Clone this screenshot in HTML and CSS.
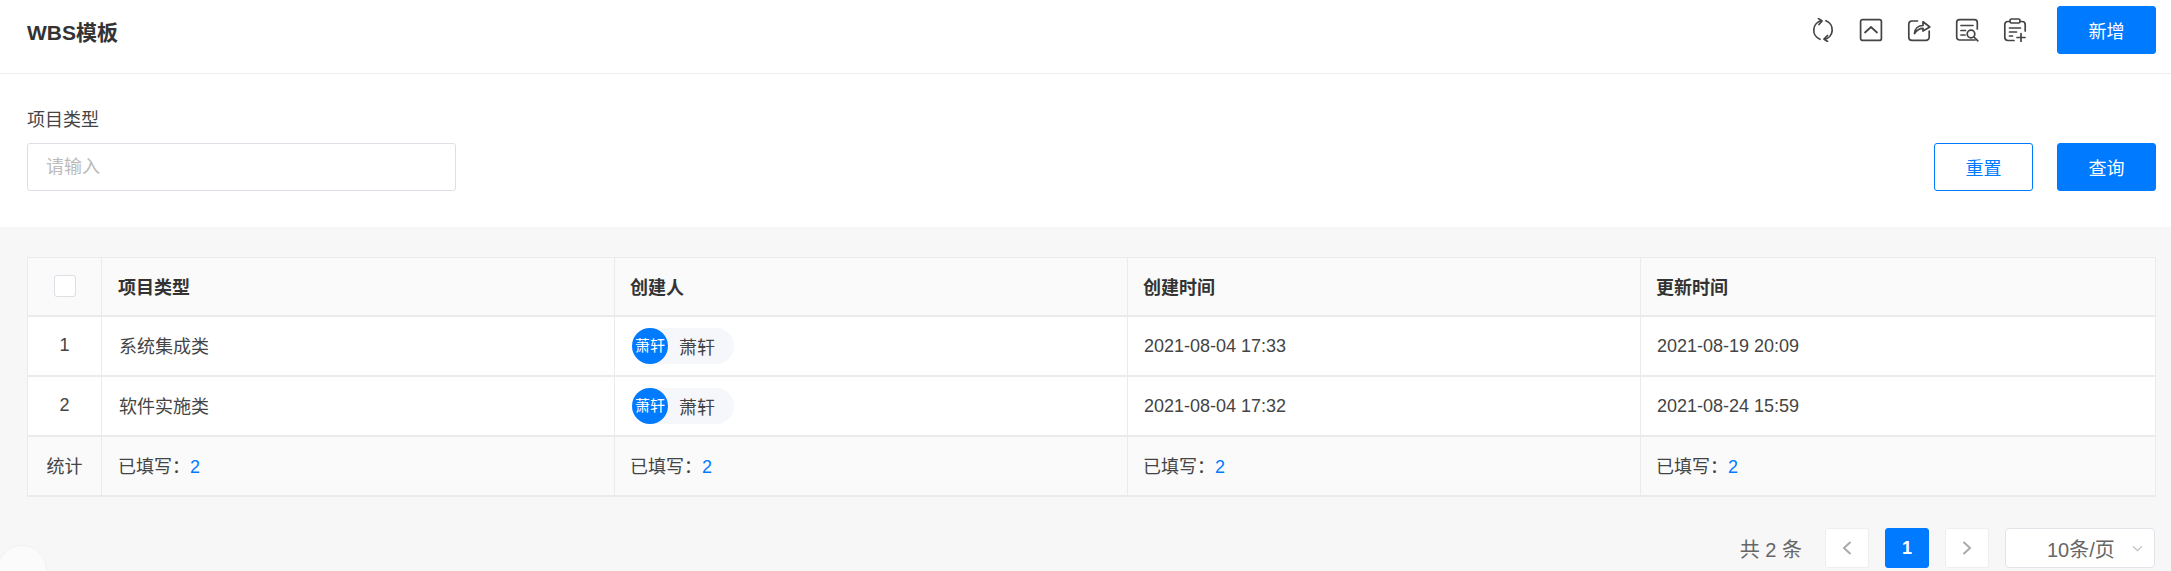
FILE: index.html
```html
<!DOCTYPE html>
<html lang="zh-CN">
<head>
    <meta charset="UTF-8">
    <title>WBS模板</title>
    <link rel="stylesheet" href="styles.css">
</head>
<body>
    <div class="page">
        <!-- 顶部标题栏 -->
        <header class="topbar">
            <h1 class="title">WBS模板</h1>
            <div class="tools">
                <svg class="tool" viewBox="0 0 24 24"><path d="M10.500 2.600A9.800 9.800 0 0 0 9 21.300M15 2.700A9.800 9.800 0 0 1 13.500 21.400"/><path d="M7.500.6L11 3 8 6.500M16.500 17.500L13 21l3.500 2.500"/></svg>
                <svg class="tool" viewBox="0 0 24 24"><rect x="1.600" y="1.600" width="20.800" height="20.800" rx="2"/><path d="M6 14.500L12 9l6 5.500"/></svg>
                <svg class="tool" viewBox="0 0 24 24"><path d="M10.500 3H5a3.200 3.200 0 0 0-3.200 3.200v13A3.200 3.200 0 0 0 5 22.400h14a3.200 3.200 0 0 0 3.200-3.200V13"/><path d="M7.500 15.500c.4-4.800 3.800-8 8.500-8V3.800L22.800 9 16 13v-2.700c-3.500 0-6.300 1.700-8.500 5.200z"/></svg>
                <svg class="tool" viewBox="0 0 24 24"><path d="M20 22H4.500a2.800 2.800 0 0 1-2.800-2.800V4.500a2.800 2.800 0 0 1 2.800-2.800h15a2.800 2.800 0 0 1 2.800 2.800V11"/><path d="M6 7.500h12M6 12.500h4.500M6 17h4"/><circle cx="16" cy="16" r="3.800"/><path d="M19 19l3.800 3.800"/></svg>
                <svg class="tool" viewBox="0 0 24 24"><path d="M7 3.500H5a3.200 3.200 0 0 0-3.200 3.200v12.600A3.200 3.200 0 0 0 5 22.500h6M17 3.500h2a3.200 3.200 0 0 1 3.200 3.200V13"/><rect x="7" y="1" width="10" height="4" rx="1.500"/><path d="M6.500 10h11M6.500 14h7M6.500 18h3M18 15.500v8M14 19.500h8"/></svg>
            </div>
            <button class="btn btn-primary">新增</button>
        </header>

        <!-- 查询条件 -->
        <section class="filter">
            <div class="field">
                <label class="field-label">项目类型</label>
                <input class="field-input" type="text" placeholder="请输入">
            </div>
            <div class="filter-actions">
                <button class="btn btn-outline">重置</button>
                <button class="btn btn-primary">查询</button>
            </div>
        </section>

        <!-- 列表 -->
        <section class="content">
            <table class="grid">
                <colgroup>
                    <col class="col-index">
                    <col class="col-type">
                    <col class="col-user">
                    <col class="col-time">
                    <col>
                </colgroup>
                <thead>
                    <tr>
                        <th class="center"><span class="check"></span></th>
                        <th class="cell-type">项目类型</th>
                        <th>创建人</th>
                        <th>创建时间</th>
                        <th>更新时间</th>
                    </tr>
                </thead>
                <tbody>
                    <tr>
                        <td class="center">1</td>
                        <td class="type-name">系统集成类</td>
                        <td class="cell-user"><span class="user"><span class="avatar">萧轩</span><span class="user-name">萧轩</span></span></td>
                        <td class="cell-time">2021-08-04 17:33</td>
                        <td class="cell-time">2021-08-19 20:09</td>
                    </tr>
                    <tr>
                        <td class="center">2</td>
                        <td class="type-name">软件实施类</td>
                        <td class="cell-user"><span class="user"><span class="avatar">萧轩</span><span class="user-name">萧轩</span></span></td>
                        <td class="cell-time">2021-08-04 17:32</td>
                        <td class="cell-time">2021-08-24 15:59</td>
                    </tr>
                </tbody>
                <tfoot>
                    <tr>
                        <td class="center">统计</td>
                        <td class="cell-type">已填写：<span class="count">2</span></td>
                        <td>已填写：<span class="count">2</span></td>
                        <td>已填写：<span class="count">2</span></td>
                        <td>已填写：<span class="count">2</span></td>
                    </tr>
                </tfoot>
            </table>

            <!-- 分页 -->
            <div class="pager">
                <span class="pager-total">共 2 条</span>
                <span class="pager-btn"><svg class="chevron" viewBox="0 0 12 16"><path d="M9.500 2L3 8l6.500 6"/></svg></span>
                <span class="pager-btn pager-current">1</span>
                <span class="pager-btn"><svg class="chevron" viewBox="0 0 12 16"><path d="M2.500 2L9 8l-6.500 6"/></svg></span>
                <span class="pager-size">10条/页<svg class="caret" viewBox="0 0 12 8"><path d="M1 1.500l5 5 5-5"/></svg></span>
            </div>
        </section>

        <div class="float-dot"></div>
    </div>
</body>
</html>
```

FILE: styles.css
```css
/* 通用 */
* {
    box-sizing: border-box;
}

html, body {
    margin: 0;
    height: 100%;
    overflow: hidden;
}

body {
    background-color: #f7f7f7;
    color: #333;
    font-family: "Liberation Sans", "Noto Sans CJK SC", sans-serif;
    font-size: 18px;
}

.page {
    position: relative;
    height: 571px;
    overflow: hidden;
}

.btn {
    width: 99px;
    height: 48px;
    font-family: inherit;
    font-size: 18px;
    border-radius: 3px;
    border: 1px solid #007aff;
    cursor: pointer;
}

.btn-primary {
    background-color: #007aff;
    color: #fff;
}

.btn-outline {
    background-color: #fff;
    color: #007aff;
}

/* 顶部标题栏 */
.topbar {
    display: flex;
    align-items: center;
    height: 74px;
    padding: 6px 15px 20px 27px;
    background-color: #fff;
    border-bottom: 1px solid #eceef2;
}

.title {
    margin: 2px 0 0;
    flex: 1;
    font-size: 21px;
    font-weight: bold;
}

.tools {
    display: flex;
    gap: 24px;
    margin-right: 30px;
}

.tool {
    width: 24px;
    height: 24px;
    fill: none;
    stroke: #444;
    stroke-width: 1.7;
    stroke-linecap: round;
    stroke-linejoin: round;
}

/* 查询条件 */
.filter {
    display: flex;
    justify-content: space-between;
    align-items: flex-end;
    height: 153px;
    padding: 0 15px 36px 27px;
    background-color: #fff;
}

.field-label {
    display: block;
    line-height: 26px;
    margin-bottom: 10px;
    color: #444;
}

.field-input {
    display: block;
    width: 429px;
    height: 48px;
    padding: 0 18px;
    font-family: inherit;
    font-size: 18px;
    border: 1px solid #dcdfe6;
    border-radius: 3px;
    outline: none;
}

.field-input::placeholder {
    color: #bbb;
}

.filter-actions {
    display: flex;
    gap: 24px;
}

/* 列表 */
.content {
    padding: 30px 15px 0 27px;
}

.grid {
    width: 2129px;
    table-layout: fixed;
    border-collapse: separate;
    border-spacing: 0;
    border-top: 1px solid #ebebeb;
    border-left: 1px solid #ebebeb;
    background-color: #fff;
}

.col-index {
    width: 74px;
}

.col-type {
    width: 513px;
}

.col-user {
    width: 513px;
}

.col-time {
    width: 513px;
}

.grid th, .grid td {
    height: 60px;
    padding: 0 16px 2px 15px;
    text-align: left;
    color: #444;
    border-right: 1px solid #ebebeb;
    border-bottom: 2px solid #ebebeb;
}

.grid thead th {
    height: 59px;
    background-color: #fafafa;
    color: #333;
    font-weight: bold;
}

.grid tfoot td {
    background-color: #fafafa;
}

.grid .center {
    padding: 0 0 2px;
    text-align: center;
}

.grid .cell-type {
    padding-left: 16px;
}

.grid .type-name {
    padding-left: 17px;
}

.grid .cell-user {
    padding: 0 0 0 17px;
}

.grid .cell-time {
    padding: 0 0 0 16px;
}

.check {
    display: inline-block;
    width: 22px;
    height: 22px;
    vertical-align: middle;
    background-color: #fff;
    border: 1px solid #dcdfe6;
    border-radius: 3px;
}

.user {
    display: inline-flex;
    align-items: center;
    height: 36px;
    padding-right: 18px;
    background-color: #f5f7fb;
    border-radius: 18px;
}

.avatar {
    width: 36px;
    height: 36px;
    line-height: 35px;
    text-align: center;
    font-size: 15px;
    color: #fff;
    background-color: #007aff;
    border-radius: 50%;
}

.user-name {
    margin-left: 11px;
    margin-right: 1px;
}

.count {
    color: #007aff;
}

/* 分页 */
.pager {
    display: flex;
    justify-content: flex-end;
    align-items: center;
    gap: 16px;
    margin-top: 31px;
    margin-right: 1px;
}

.pager-total {
    margin-right: 7px;
    font-size: 20px;
    color: #666;
}

.pager-btn {
    display: flex;
    justify-content: center;
    align-items: center;
    width: 44px;
    height: 40px;
    background-color: #fff;
    border: 1px solid #eee;
    border-radius: 3px;
}

.pager-current {
    background-color: #007aff;
    border-color: #007aff;
    color: #fff;
    font-weight: bold;
}

.chevron {
    width: 12px;
    height: 16px;
    fill: none;
    stroke: #aaa;
    stroke-width: 2;
}

.pager-size {
    display: flex;
    align-items: center;
    width: 150px;
    height: 40px;
    padding-left: 41px;
    font-size: 20px;
    color: #666;
    background-color: #fff;
    border: 1px solid #e2e2e8;
    border-radius: 4px;
}

.caret {
    width: 11px;
    height: 7px;
    margin-left: 17px;
    fill: none;
    stroke: #bbb;
    stroke-width: 1.2;
}

/* 左下角悬浮球 */
.float-dot {
    position: absolute;
    left: -3px;
    top: 545px;
    width: 50px;
    height: 50px;
    background-color: #fbfbfb;
    border: 1px solid #f0f0f0;
    border-radius: 50%;
}
```
